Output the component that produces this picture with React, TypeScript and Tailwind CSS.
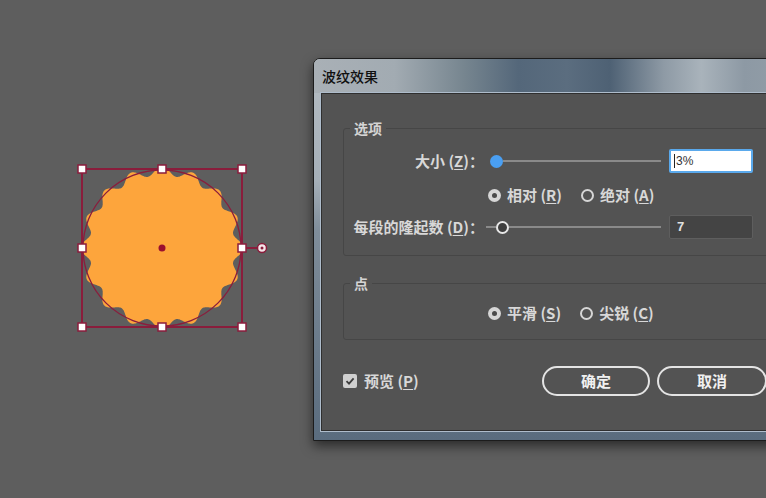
const CJK = "font-['Noto_Sans_CJK_SC','Noto_Sans',sans-serif]"

function wavePath(cx: number, cy: number, r: number, amp: number, n: number) {
  const pts: string[] = []
  for (let i = 0; i < 720; i++) {
    const t = (i / 720) * Math.PI * 2
    const rr = r + amp * Math.cos(n * t)
    pts.push(`${(cx + rr * Math.sin(t)).toFixed(1)},${(cy - rr * Math.cos(t)).toFixed(1)}`)
  }
  return "M" + pts.join("L") + "Z"
}

function Canvas() {
  const handles = [
    [82, 169], [162, 169], [242, 169],
    [82, 248], [242, 248],
    [82, 327], [162, 327], [242, 327],
  ]
  return (
    <svg width="313" height="498" className="shrink-0">
      <path d={wavePath(162, 248, 77, 4.5, 16)} fill="#fda53c" />
      <ellipse cx="162" cy="248" rx="79" ry="78" fill="none" stroke="#8a1d3c" strokeWidth="1.3" />
      <rect x="82" y="169" width="160" height="158" fill="none" stroke="#8a1d3c" strokeWidth="2" />
      <line x1="242" y1="248" x2="258" y2="248" stroke="#8a1d3c" strokeWidth="2" />
      <circle cx="262" cy="248" r="4.5" fill="#f4e6ea" stroke="#8a1d3c" strokeWidth="1.5" />
      <circle cx="262" cy="248" r="1.5" fill="#8a1d3c" />
      {handles.map(([x, y]) => (
        <rect key={`${x}-${y}`} x={x - 4} y={y - 4} width="8" height="8" fill="#ffffff" stroke="#8a1d3c" strokeWidth="1.5" />
      ))}
      <circle cx="162" cy="248" r="3.5" fill="#9b0f2e" />
    </svg>
  )
}

function Key({ k }: { k: string }) {
  return (
    <span>
      {" "}(<span className="underline underline-offset-2">{k}</span>)
    </span>
  )
}

function Radio({ on, label, k }: { on?: boolean; label: string; k: string }) {
  return (
    <div className="flex shrink-0 items-center gap-[6px] whitespace-nowrap">
      {on ? (
        <span className="flex h-[13px] w-[13px] items-center justify-center rounded-full bg-[#d6d6d6]">
          <span className="h-[5px] w-[5px] rounded-full bg-[#4a4a4a]" />
        </span>
      ) : (
        <span className="h-[13px] w-[13px] rounded-full border-2 border-[#d6d6d6]" />
      )}
      <span>
        {label}
        <Key k={k} />
      </span>
    </div>
  )
}

function Group({ title, children, className }: { title: string; children: React.ReactNode; className?: string }) {
  return (
    <fieldset className={`ml-[21px] rounded-[3px] border border-[#464646] ${className ?? ""}`}>
      <legend className="ml-[6px] px-[4px] text-[14px] leading-[20px] text-[#d4d4d4]">{title}</legend>
      {children}
    </fieldset>
  )
}

export default function App() {
  return (
    <div className={`flex h-[498px] w-[766px] items-start overflow-hidden bg-[#5e5e5e] ${CJK}`}>
      <Canvas />

      <div className="mt-[58px] flex w-[540px] shrink-0 flex-col rounded-t-[7px] border border-[#1c1c1c] bg-[linear-gradient(180deg,#b6bdc3_0%,#a5afb8_32%,#7f8d9a_45%,#5a6c7e_100%)] shadow-[0_5px_12px_rgba(0,0,0,0.55)]">
        <div className="flex h-[34px] items-center rounded-t-[6px] bg-[linear-gradient(90deg,#a9b0b6_0%,#a2abb2_15%,#76858f_28%,#54677a_38%,#5b6d7f_47%,#4e6174_55%,#8e9aa5_65%,#a9b3bb_72%,#8d99a4_80%,#9aa4ac_100%)] pl-[8px]">
          <span className="text-[14px] font-medium text-[#101010]">波纹效果</span>
        </div>

        <div className="px-[7px] pb-[9px]">
          <div className="flex h-[338px] flex-col border border-[#2f2f2f] bg-[#535353] text-[15px] font-semibold text-[#d8d8d8] shadow-[0_0_0_1px_#aebccb]">
            <Group title="选项" className="mt-[24px] h-[138px]">
              <div className="mt-[11px] flex h-[24px] items-center">
                <div className="w-[142px] shrink-0 whitespace-nowrap pr-[2px] text-right">
                  大小<Key k="Z" />：
                </div>
                <div className="flex w-[175px] shrink-0 items-center">
                  <span className="ml-[4px] h-[13px] w-[13px] shrink-0 rounded-full bg-[#4a9ff2]" />
                  <span className="h-[2px] flex-1 bg-[#8a8a8a]" />
                </div>
                <div className="ml-[8px] flex h-[24px] w-[84px] shrink-0 items-center rounded-[2px] border-2 border-[#5aa9ec] bg-white pl-[3px] font-['Liberation_Sans',sans-serif] text-[12px] font-normal text-[#333]">
                  <span className="mr-[1px] h-[14px] w-px bg-[#222]" />3%
                </div>
              </div>

              <div className="mt-[10px] flex h-[24px] items-center gap-[19px] pl-[144px]">
                <Radio on label="相对" k="R" />
                <Radio label="绝对" k="A" />
              </div>

              <div className="mt-[8px] flex h-[24px] items-center">
                <div className="w-[142px] shrink-0 whitespace-nowrap pr-[2px] text-right">
                  每段的隆起数<Key k="D" />：
                </div>
                <div className="flex w-[175px] shrink-0 items-center">
                  <span className="h-[2px] w-[10px] bg-[#8a8a8a]" />
                  <span className="h-[13px] w-[13px] shrink-0 rounded-full border-2 border-[#e8e8e8] bg-[#3e3e3e]" />
                  <span className="h-[2px] flex-1 bg-[#8a8a8a]" />
                </div>
                <div className="ml-[8px] flex h-[24px] w-[84px] shrink-0 items-center rounded-[2px] border border-[#5e5e5e] bg-[#444444] pl-[7px] font-['Liberation_Sans',sans-serif] text-[13px] font-bold text-[#e0e0e0]">
                  7
                </div>
              </div>
            </Group>

            <Group title="点" className="mt-[17px] h-[67px]">
              <div className="mt-[8px] flex h-[24px] items-center gap-[19px] pl-[144px]">
                <Radio on label="平滑" k="S" />
                <Radio label="尖锐" k="C" />
              </div>
            </Group>

            <div className="mt-[26px] flex h-[30px] items-center pl-[21px]">
              <div className="flex w-[199px] shrink-0 items-center gap-[7px] whitespace-nowrap">
                <span className="flex h-[14px] w-[14px] items-center justify-center rounded-[2px] bg-[#d0d0d0]">
                  <svg width="10" height="10" viewBox="0 0 10 10">
                    <path d="M1.5 5.2 L4 7.6 L8.6 2.4" fill="none" stroke="#3c3c3c" strokeWidth="1.8" />
                  </svg>
                </span>
                <span>
                  预览<Key k="P" />
                </span>
              </div>
              <button className="h-[30px] w-[108px] shrink-0 rounded-full border-2 border-[#e4e4e4] text-[15px] font-bold text-[#f0f0f0]">
                确定
              </button>
              <button className="ml-[7px] h-[30px] w-[110px] shrink-0 rounded-full border-2 border-[#e4e4e4] text-[15px] font-bold text-[#f0f0f0]">
                取消
              </button>
            </div>
          </div>
        </div>
      </div>
    </div>
  )
}
